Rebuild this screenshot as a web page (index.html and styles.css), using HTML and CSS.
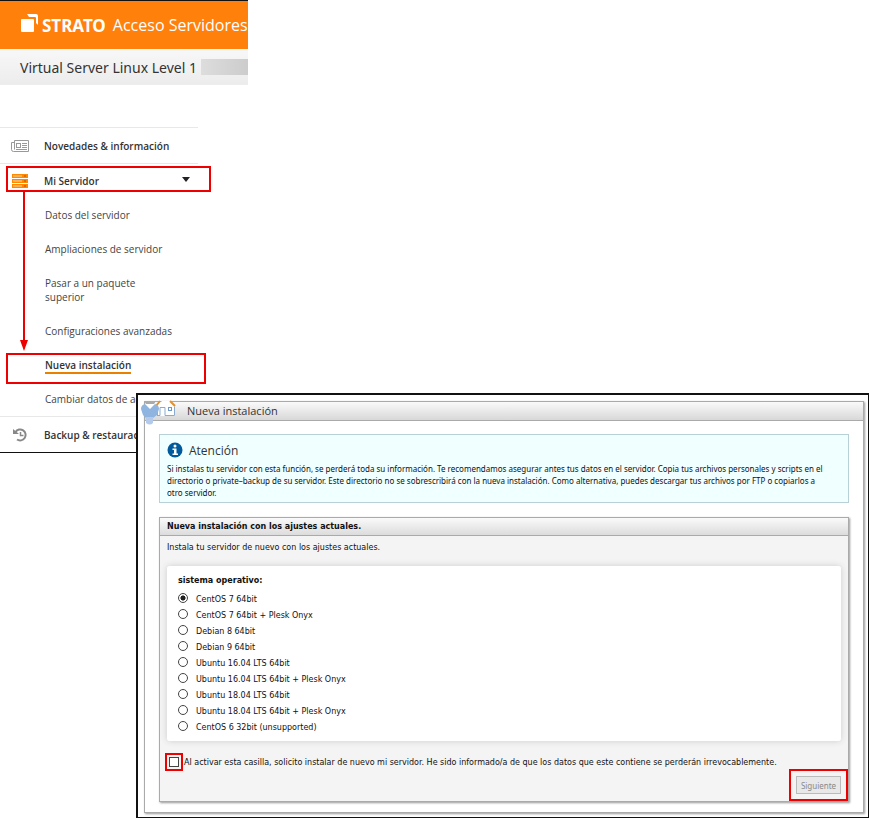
FILE: index.html
```html
<!DOCTYPE html>
<html lang="es">
<head>
    <meta charset="UTF-8">
    <meta name="viewport" content="width=device-width, initial-scale=1.0">
    <title>STRATO Acceso Servidores</title>
    <link rel="stylesheet" href="styles.css">
</head>
<body>
    <div class="sidebar">
        <header class="brand">
            <svg class="brand-icon" width="19" height="19" viewBox="0 0 19 19">
                <rect x="1" y="5" width="13" height="13" rx="1" fill="#fff"/>
                <path d="M7 0h9a2 2 0 0 1 2 2v9l-2-2V4a1 1 0 0 0-1-1H9z" fill="#fff"/>
            </svg>
            <span class="brand-name">STRATO</span>
            <span class="brand-title">Acceso Servidores</span>
        </header>
        <div class="package">
            <span>Virtual Server Linux Level 1</span>
            <span class="redacted"></span>
        </div>
        <nav class="menu">
            <a href="#" class="menu-item">
                <svg class="menu-icon" width="18" height="14" viewBox="0 0 18 14" fill="none" stroke="#999">
                    <path d="M3.5 1.5h14v11h-15a2 2 0 0 1-2-2v-7h3M3.5 1.5v9"/>
                    <rect x="5.5" y="4.5" width="4" height="4"/>
                    <path d="M11 4.5h5M11 6.5h5M11 8.5h5M5 10.5h11"/>
                </svg>
                Novedades &amp; información
            </a>
            <a href="#" class="menu-item marked">
                <svg class="menu-icon" width="18" height="14" viewBox="0 0 18 14">
                    <g fill="#f80">
                        <rect x="1" y="0" width="16" height="4"/>
                        <rect x="1" y="5" width="16" height="4"/>
                        <rect x="1" y="10" width="16" height="4"/>
                    </g>
                    <path d="M2 2h9M2 7h9M2 12h9" stroke="#ffd9a8"/>
                    <path d="M13 2h2M13 7h2M13 12h2" stroke="#a50"/>
                </svg>
                Mi Servidor
                <svg class="caret" width="8" height="5" viewBox="0 0 8 5"><path d="M0 0h8L4 5z" fill="#222"/></svg>
                <svg class="arrow" width="10" height="159" viewBox="0 0 10 159">
                    <path d="M5 0v150" stroke="#e00" stroke-width="2"/>
                    <path d="M1 148h8l-4 11z" fill="#e00"/>
                </svg>
            </a>
            <a href="#" class="submenu-item">Datos del servidor</a>
            <a href="#" class="submenu-item">Ampliaciones de servidor</a>
            <a href="#" class="submenu-item">Pasar a un paquete<br>superior</a>
            <a href="#" class="submenu-item">Configuraciones avanzadas</a>
            <a href="#" class="submenu-item marked active"><span>Nueva instalación</span></a>
            <a href="#" class="submenu-item">Cambiar datos de acceso</a>
            <a href="#" class="menu-item">
                <svg class="menu-icon" width="18" height="14" viewBox="0 0 18 14" fill="none" stroke="#888">
                    <path d="M4.5 4A5.5 5.5 0 1 1 6 11.5" stroke-width="2"/>
                    <path d="M2 1v5h6z" fill="#888" stroke="none"/>
                    <path d="M9.5 4v3.5h3" stroke-width="1.5"/>
                </svg>
                Backup &amp; restauración
            </a>
        </nav>
    </div>

    <main class="window">
        <svg class="window-icon" width="36" height="26" viewBox="0 0 36 26">
            <path d="M16 6v10h18V6l-5-5h-8z" fill="#fff"/>
            <path d="M16.5 15.5v-9M16 15.5h3v-8h5v8h9.500v-9" fill="none" stroke="#8aabd0"/>
            <rect x="27.5" y="7.5" width="3" height="3" fill="#fff" stroke="#6f99c8"/>
            <path d="M15 6l4-5M29 1l5 5" stroke="#e2912f" stroke-width="2"/>
            <path d="M3 1h12l-2 3H5z" fill="#aaa"/>
            <path d="M4 4h10l-5 6z" fill="#fff"/>
            <path d="M0 9q0-4 4-5l5 5 5-5q4 1 4 5l-2 6-4 3H5l-3-3z" fill="#8eb4df"/>
            <path d="M5 17h7v6q-3 3-7 0z" fill="#b4caea"/>
        </svg>
        <div class="panel">
            <h1 class="panel-title">Nueva instalación</h1>
            <div class="panel-body">
                <section class="notice">
                    <h2>
                        <svg width="16" height="16" viewBox="0 0 16 16">
                            <circle cx="8" cy="8" r="7.5" fill="#005a9c"/>
                            <circle cx="8" cy="4" r="1.5" fill="#fff"/>
                            <path d="M5.5 6.5h4v5h1.5v1.5h-5.5v-1.5h1.5v-3.5h-1.5z" fill="#fff"/>
                        </svg>
                        Atención
                    </h2>
                    <p>Si instalas tu servidor con esta función, se perderá toda su información. Te recomendamos asegurar antes tus datos en el servidor. Copia tus archivos personales y scripts en el directorio o private–backup de su servidor. Este directorio no se sobrescribirá con la nueva instalación. Como alternativa, puedes descargar tus archivos por FTP o copiarlos a otro servidor.</p>
                </section>
                <form class="install">
                    <h2 class="install-title">Nueva instalación con los ajustes actuales.</h2>
                    <p class="install-text">Instala tu servidor de nuevo con los ajustes actuales.</p>
                    <fieldset class="systems">
                        <legend>sistema operativo:</legend>
                        <label><input type="radio" name="os" checked>CentOS 7 64bit</label>
                        <label><input type="radio" name="os">CentOS 7 64bit + Plesk Onyx</label>
                        <label><input type="radio" name="os">Debian 8 64bit</label>
                        <label><input type="radio" name="os">Debian 9 64bit</label>
                        <label><input type="radio" name="os">Ubuntu 16.04 LTS 64bit</label>
                        <label><input type="radio" name="os">Ubuntu 16.04 LTS 64bit + Plesk Onyx</label>
                        <label><input type="radio" name="os">Ubuntu 18.04 LTS 64bit</label>
                        <label><input type="radio" name="os">Ubuntu 18.04 LTS 64bit + Plesk Onyx</label>
                        <label><input type="radio" name="os">CentOS 6 32bit (unsupported)</label>
                    </fieldset>
                    <label class="confirm">
                        <span class="confirm-box"><input type="checkbox"></span>
                        Al activar esta casilla, solicito instalar de nuevo mi servidor. He sido informado/a de que los datos que este contiene se perderán irrevocablemente.
                    </label>
                    <div class="actions">
                        <div class="next-box"><button type="button" disabled>Siguiente</button></div>
                    </div>
                </form>
            </div>
        </div>
    </main>
</body>
</html>
```
FILE: styles.css
```css
* {
    box-sizing: border-box;
}
body {
    display: grid;
    grid-template-columns: 100%;
    margin: 0;
    background: #fff;
    color: #333;
    font-family: "Open Sans", "Noto Sans", sans-serif;
}
h1, h2, p {
    margin: 0;
    font-weight: normal;
}

/* Sidebar */
.sidebar {
    grid-area: 1 / 1;
    align-self: start;
    width: 248px;
    border-top: 1px solid #111;
    border-bottom: 1px solid #111;
}
.brand {
    display: flex;
    align-items: center;
    height: 48px;
    padding-left: 20px;
    background: #ff800a;
    color: #fff;
    white-space: nowrap;
}
.brand-icon {
    margin-bottom: 4px;
}
.brand-name {
    margin: 0 7px 0 3px;
    font: bold 17px "Noto Sans", sans-serif;
}
.brand-title {
    font-size: 16px;
}
.package {
    display: flex;
    align-items: center;
    gap: 4px;
    height: 36px;
    padding-left: 20px;
    background: linear-gradient(#f8f8f8, #ececec);
    font: 14px "Noto Sans", sans-serif;
    white-space: nowrap;
}
.redacted {
    flex: 1;
    height: 16px;
    background: linear-gradient(90deg, #ddd, #ccc);
}
.menu {
    width: 198px;
    padding-top: 42px;
}
.menu a {
    display: block;
    position: relative;
    padding: 10px 0 10px 45px;
    color: #444;
    font-size: 10px;
    line-height: 14px;
    text-decoration: none;
    white-space: nowrap;
}
.menu .menu-item {
    display: flex;
    align-items: center;
    gap: 15px;
    padding: 11px 0 10px 11px;
    border-top: 1px solid #e8e8e8;
    color: #333;
    font-weight: 600;
}
.menu .marked {
    padding-top: 10px;
}
.caret {
    margin: 0 8px 4px auto;
}
.marked::after {
    content: "";
    position: absolute;
    inset: 2px -13px 6px 6px;
    border: 2px solid #e00;
}
.arrow {
    position: absolute;
    left: 19px;
    top: 28px;
    z-index: 1;
}
.menu .active {
    color: #333;
    font-weight: 600;
}
.active::after {
    inset: 5px -8px -2px 6px;
}
.active span {
    border-bottom: 2px solid #e98000;
}

/* Overlapping window */
.window {
    grid-area: 1 / 1;
    position: relative;
    margin: 393px 0 0 136px;
    padding: 6px 4px 4px 6px;
    border: 2px solid #111;
    border-width: 2px 1px 1px 2px;
    background: #fff;
    color: #111;
    font-family: "DejaVu Sans", Verdana, sans-serif;
}
.window-icon {
    position: absolute;
    left: 3px;
    top: 5px;
}
.panel {
    border: 1px solid #aaa;
    box-shadow: 1px 1px 2px #999;
}
.panel-title {
    padding-left: 42px;
    border-bottom: 1px solid #aaa;
    background: linear-gradient(#fafafa, #d8d8d8);
    color: #333;
    font: 11px/18px "Open Sans", sans-serif;
}
.panel-body {
    padding: 13px 14px 10px;
}
.notice {
    padding: 7px 7px 3px;
    border: 1px solid #b9d0d6;
    background: #f0ffff;
}
.notice h2 {
    display: flex;
    align-items: center;
    gap: 6px;
    height: 16px;
    color: #333;
    font: 12px "Open Sans", sans-serif;
}
.notice p {
    margin-top: 5px;
    padding-right: 12px;
    font: 8px/12px "Noto Sans", sans-serif;
}
.install {
    margin-top: 14px;
    border: 1px solid #aaa;
    background: #f4f4f4;
    box-shadow: 1px 1px 2px #999;
    font-size: 8px;
}
.install-title {
    padding-left: 7px;
    border-bottom: 1px solid #aaa;
    background: linear-gradient(#fafafa, #dcdcdc);
    font-size: 8px;
    line-height: 17px;
    font-weight: bold;
}
.install-text {
    padding: 6px 7px;
    line-height: 12px;
}
.systems {
    margin: 6px 7px 0;
    padding: 9px 11px 6px;
    border: 0;
    border-radius: 3px;
    background: #fff;
    box-shadow: 0 0 6px #ccc;
}
.systems legend {
    float: left;
    width: 100%;
    margin-bottom: 4px;
    padding: 0;
    font-weight: bold;
    line-height: 12px;
}
.systems label {
    clear: both;
    display: flex;
    align-items: center;
    gap: 8px;
    height: 16px;
}
.systems input {
    appearance: none;
    width: 10px;
    height: 10px;
    margin: 0 0 3px;
    border: 1px solid #444;
    border-radius: 50%;
    background: #fff;
}
.systems input:checked {
    background: radial-gradient(#222 40%, #fff 50%);
}
.confirm {
    display: flex;
    align-items: center;
    gap: 1px;
    margin: 12px 5px 0;
    white-space: nowrap;
}
.confirm-box {
    display: flex;
    padding: 2px;
    border: 2px solid #e00;
}
.confirm input {
    appearance: none;
    width: 10px;
    height: 10px;
    margin: 0;
    border: 1px solid #444;
    background: #fff;
}
.actions {
    display: flex;
    justify-content: flex-end;
    margin-top: -2px;
}
.next-box {
    padding: 5px;
    border: 2px solid #e00;
}
.next-box button {
    display: block;
    width: 45px;
    height: 18px;
    padding: 0;
    border: 1px solid #bbb;
    background: #e8e8e8;
    color: #888;
    font: 8px "Noto Sans", sans-serif;
}
```
